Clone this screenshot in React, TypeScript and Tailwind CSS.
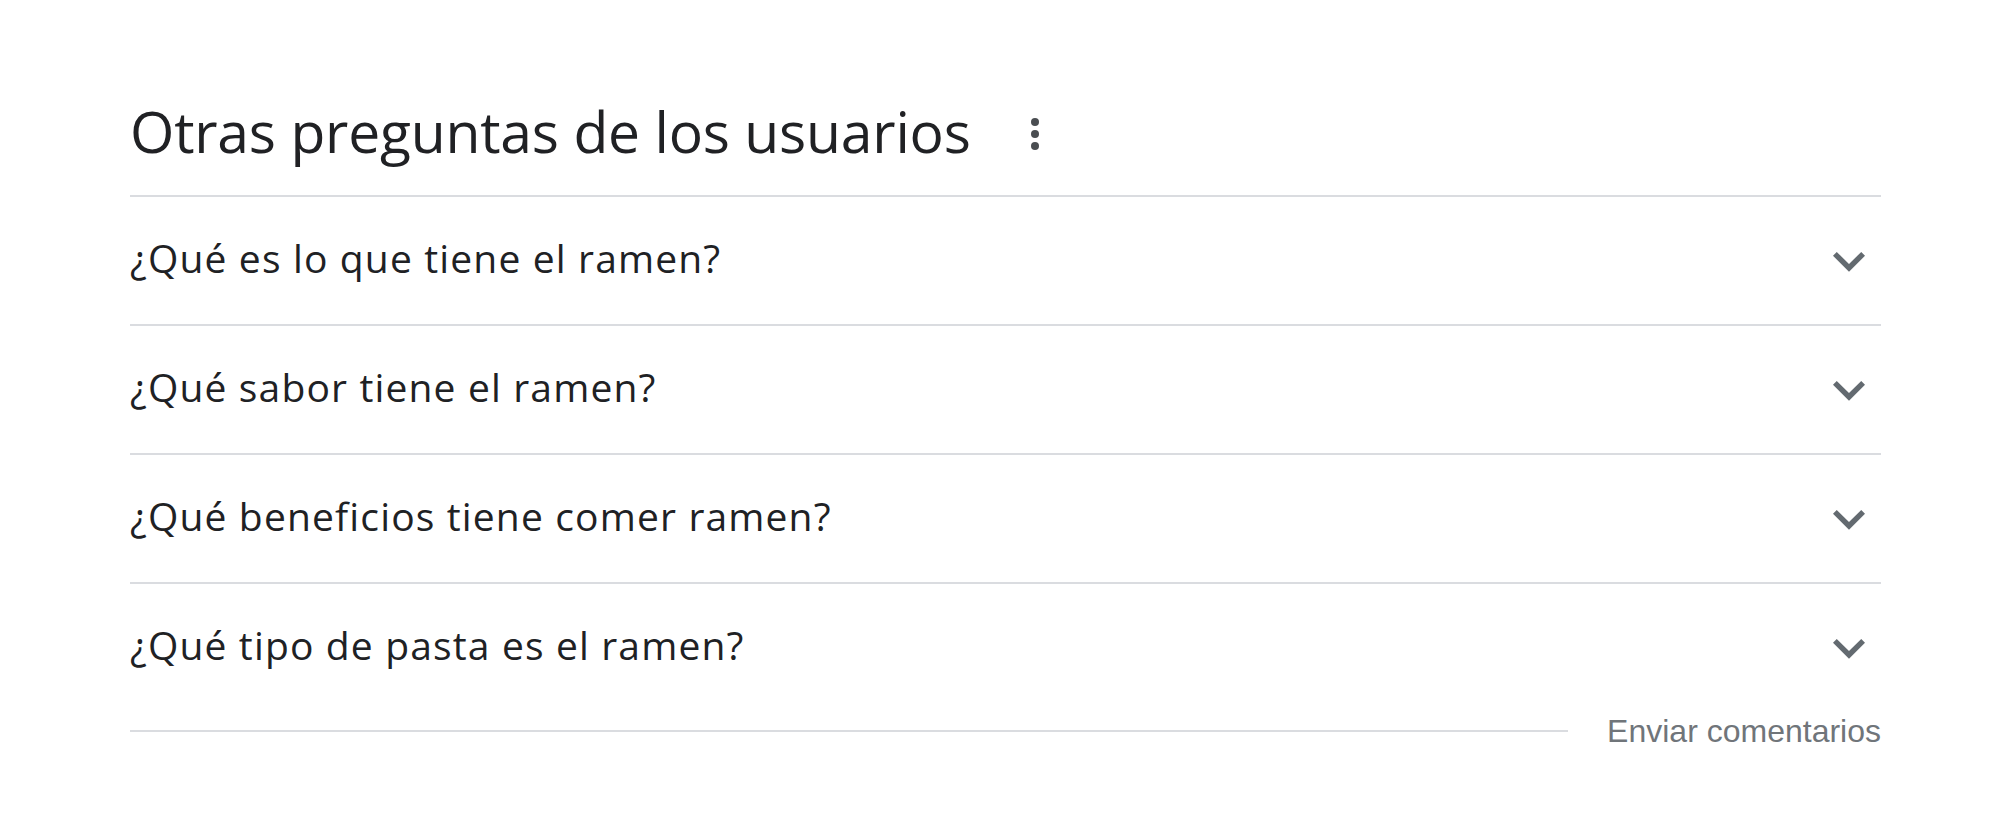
const questions = [
  "¿Qué es lo que tiene el ramen?",
  "¿Qué sabor tiene el ramen?",
  "¿Qué beneficios tiene comer ramen?",
  "¿Qué tipo de pasta es el ramen?",
];

function MoreVert() {
  return (
    <svg viewBox="0 0 24 24" className="w-12 h-12 fill-[#4a4d51]">
      <circle cx="12" cy="6" r="2" />
      <circle cx="12" cy="12" r="2" />
      <circle cx="12" cy="18" r="2" />
    </svg>
  );
}

function ExpandMore() {
  return (
    <svg viewBox="0 0 24 24" className="w-16 h-16 fill-[#636a70]">
      <path d="M16.59 8.59L12 13.17 7.41 8.59 6 10l6 6 6-6z" />
    </svg>
  );
}

export default function App() {
  return (
    <div className="min-h-screen w-full bg-white pt-[73px] pl-[130px]">
      <div className="w-[1751px]">
        {/* Header */}
        <div className="h-[122px] flex items-center pb-[6px]">
          <h2 className="text-[57px] leading-none text-[#202124] font-['Open_Sans',sans-serif] tracking-[-0.2px]">
            Otras preguntas de los usuarios
          </h2>
          <div className="ml-[40px] mt-[6px]">
            <MoreVert />
          </div>
        </div>

        {/* Questions */}
        <div className="border-t-2 border-[#dadce0]">
          {questions.map((q, i) => (
            <div
              key={q}
              className={
                i < questions.length - 1
                  ? "h-[129px] flex items-center justify-between border-b-2 border-[#dadce0]"
                  : "h-[127px] flex items-center justify-between"
              }
            >
              <span className="pb-[6px] text-[39px] leading-none text-[#202124] font-['Open_Sans',sans-serif] tracking-[1.15px]">
                {q}
              </span>
              <ExpandMore />
            </div>
          ))}
        </div>

        {/* Footer */}
        <div className="h-10 flex items-center">
          <div className="flex-1 h-[2px] bg-[#dadce0]" />
          <span className="ml-[39px] text-[32px] leading-none text-[#70757a] font-['Liberation_Sans',Arial,sans-serif]">
            Enviar comentarios
          </span>
        </div>
      </div>
    </div>
  );
}
